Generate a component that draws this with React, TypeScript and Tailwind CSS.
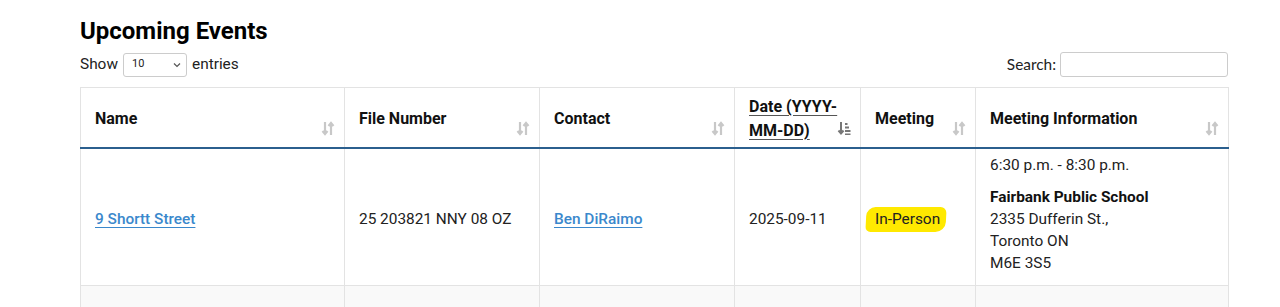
import React from "react";

const SortIcon: React.FC<{ active?: boolean }> = ({ active }) =>
  active ? (
    <svg width="14" height="15" viewBox="0 0 14 15" className="text-[#777]">
      <path d="M4 1v11M1.5 9.5 4 12.5 6.5 9.5" stroke="currentColor" strokeWidth="2" fill="none" />
      <rect x="8" y="2" width="2.5" height="2" fill="currentColor" />
      <rect x="8" y="5.5" width="4" height="2" fill="currentColor" />
      <rect x="8" y="9" width="5.5" height="2" fill="currentColor" />
      <rect x="8" y="12.5" width="5.5" height="1.5" fill="currentColor" />
    </svg>
  ) : (
    <svg width="14" height="15" viewBox="0 0 14 15" className="text-[#c8c8c8]">
      <path d="M4 1v12M1.5 10 4 13 6.5 10" stroke="currentColor" strokeWidth="2.2" fill="none" />
      <path d="M10 14V2M7.5 5 10 2 12.5 5" stroke="currentColor" strokeWidth="2.2" fill="none" />
    </svg>
  );

const columns = [
  { label: "Name", width: "w-[264px]", pad: "pr-[28px]" },
  { label: "File Number", width: "w-[195px]", pad: "pr-[28px]" },
  { label: "Contact", width: "w-[195px]", pad: "pr-[28px]" },
  { label: "Date (YYYY-MM-DD)", width: "w-[126px]", pad: "pr-[18px]", active: true },
  { label: "Meeting", width: "w-[115px]", pad: "pr-[28px]" },
  { label: "Meeting Information", width: "w-[253px]", pad: "pr-[28px]" },
];

export default function App() {
  return (
    <div className="min-h-[307px] bg-white pl-[80px] text-[15.4px] text-[#222]" style={{ fontFamily: "Roboto, 'Liberation Sans', sans-serif" }}>
      <h2 className="pt-[15px] text-[24px] font-bold leading-[32px] text-black">Upcoming Events</h2>

      {/* Length + search */}
      <div className="flex w-[1148px] items-center justify-between pt-[5px]">
        <label className="flex items-center gap-[5px]">
          <span>Show</span>
          <span className="flex h-[24px] w-[64px] items-center justify-between rounded-[3px] border border-[#ccc] pl-[8px] pr-[5px] text-[11px]">
            10
            <svg width="8" height="6" viewBox="0 0 8 6"><path d="M1 1.5 4 4.5 7 1.5" stroke="#555" strokeWidth="1.2" fill="none" /></svg>
          </span>
          <span>entries</span>
        </label>
        <label className="flex items-center gap-[4px]" style={{ fontFamily: "Lato, 'Liberation Sans', sans-serif" }}>
          <span>Search:</span>
          <span className="h-[25px] w-[168px] rounded-[3px] border border-[#ccc]" />
        </label>
      </div>

      <table className="mt-[10px] w-[1148px] table-fixed border-collapse">
        <thead>
          <tr className="h-[60px] border-b-2 border-[#2b5f8e]">
            {columns.map((c) => (
              <th
                key={c.label}
                className={`${c.width} ${c.pad} relative border border-b-0 border-[#e3e3e3] pt-[3px] pb-0 pl-[14px] text-left align-middle text-[16px] font-bold leading-[24px] text-[#111]`}
              >
                {c.active ? (
                  <span className="underline decoration-[#555] underline-offset-[3px]">{c.label}</span>
                ) : (
                  c.label
                )}
                <span className="absolute right-[9px] bottom-[11px] flex">
                  <SortIcon active={c.active} />
                </span>
              </th>
            ))}
          </tr>
        </thead>
        <tbody>
          <tr className="h-[138px] border-b border-[#e3e3e3]">
            <td className="border-x border-[#e3e3e3] pl-[14px] pr-[15px] pt-[5px] align-middle">
              <a className="font-medium text-[#3a88cc] underline underline-offset-[3px]">9 Shortt Street</a>
            </td>
            <td className="border-x border-[#e3e3e3] pl-[14px] pr-[15px] pt-[5px] align-middle">25 203821 NNY 08 OZ</td>
            <td className="border-x border-[#e3e3e3] pl-[14px] pr-[15px] pt-[5px] align-middle">
              <a className="font-medium text-[#3a88cc] underline underline-offset-[3px]">Ben DiRaimo</a>
            </td>
            <td className="border-x border-[#e3e3e3] pl-[14px] pr-[15px] pt-[5px] align-middle">2025-09-11</td>
            <td className="border-x border-[#e3e3e3] pl-[14px] pr-[15px] pt-[5px] align-middle">
              <span className="-ml-[9px] inline-block -skew-x-3 rounded-[9px_6px_10px_5px] bg-[#ffe900] pl-[9px] pr-[6px] py-[1px]">
                <span className="inline-block skew-x-3">In-Person</span>
              </span>
            </td>
            <td className="border-x border-[#e3e3e3] pl-[14px] pr-[15px] pt-[5px] pb-[4px] align-top leading-[22px]">
              <p>6:30 p.m. - 8:30 p.m.</p>
              <p className="mt-[10px] font-bold text-[#111]">Fairbank Public School</p>
              <p>2335 Dufferin St.,</p>
              <p>Toronto ON</p>
              <p>M6E 3S5</p>
            </td>
          </tr>
          <tr className="h-[30px] bg-[#f9f9f9]">
            {columns.map((c) => (
              <td key={c.label} className="border-x border-[#e3e3e3]" />
            ))}
          </tr>
        </tbody>
      </table>
    </div>
  );
}
